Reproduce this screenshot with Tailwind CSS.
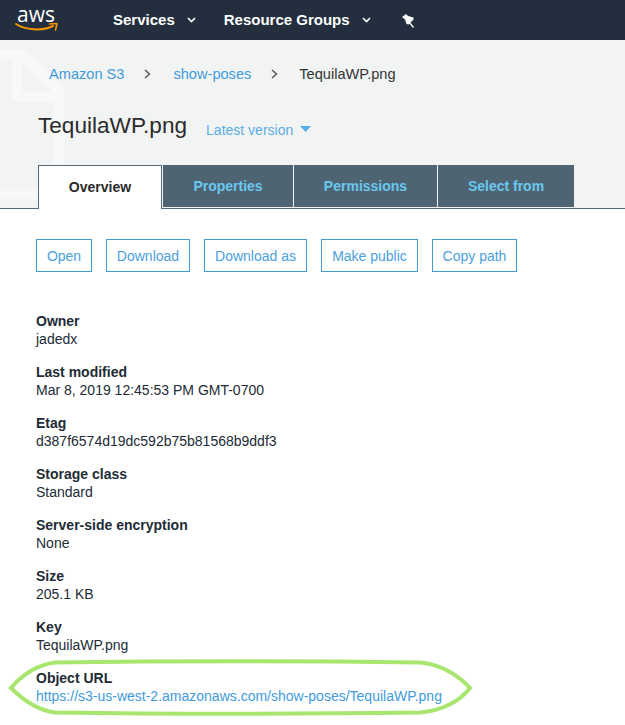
<!DOCTYPE html>
<html lang="en">
<head>
  <meta charset="UTF-8">
  <meta name="viewport" content="width=device-width, initial-scale=1.0">
  <title>TequilaWP.png - S3</title>
  <script src="https://cdn.jsdelivr.net/npm/@tailwindcss/browser@4"></script>
</head>

<body class="relative h-[725px] w-[625px] overflow-hidden bg-white font-['Liberation_Sans',Arial,sans-serif] text-[14px] leading-[18px] text-[#212b36]">

  <!-- Top nav -->
  <nav class="relative flex h-10 items-center bg-[#232f3e] text-white">
    <div class="relative h-10 w-[113px] shrink-0">
      <span class="absolute left-[17px] top-[2px] font-['Open_Sans',sans-serif] text-[21px] leading-[24px]">aws</span>
      <svg class="absolute left-[15px] top-[21px]" width="44" height="12" viewBox="0 0 44 12" fill="none">
        <path d="M1 3C10 9 27 10.5 38 5" stroke="#f79400" stroke-width="2" stroke-linecap="round"/>
        <path d="M34.5 3L42 2.5L40.5 9" stroke="#f79400" stroke-width="1.6" stroke-linecap="round" stroke-linejoin="round"/>
      </svg>
    </div>
    <span class="text-[15px] font-bold">Services</span>
    <svg class="ml-[12px]" width="9" height="6" viewBox="0 0 9 6" fill="none"><path d="M1 1L4.5 4.5L8 1" stroke="#fff" stroke-width="1.6"/></svg>
    <span class="ml-[28px] text-[15px] font-bold">Resource Groups</span>
    <svg class="ml-[12px]" width="9" height="6" viewBox="0 0 9 6" fill="none"><path d="M1 1L4.5 4.5L8 1" stroke="#fff" stroke-width="1.6"/></svg>
    <svg class="ml-[31px] mt-[1px]" width="14" height="14" viewBox="0 0 14 14" fill="#fff">
      <path d="M0 3L4 0L6 2L11.5 3.5L11.5 5.5L6.5 10.5L4.5 10L3 5.5Z"/>
      <path d="M7 8L11.5 13.5" stroke="#fff" stroke-width="1.3"/>
    </svg>
  </nav>

  <!-- Header area -->
  <header class="relative h-[169px] border-b border-[#546b7a] bg-[#f2f4f4]">
    <svg class="absolute left-0 top-0" width="70" height="168" viewBox="0 0 70 168" fill="none" stroke="#f7f8f8" stroke-linejoin="round">
      <path d="M-6 15H22L59 50V170" stroke-width="11"/>
      <path d="M17 18V57H59" stroke-width="10"/>
      <path d="M-6 154H60" stroke-width="10"/>
    </svg>

    <div class="relative flex h-[67px] items-center pl-[49px] text-[14.6px]">
      <a class="text-[#3f9bdc]">Amazon S3</a>
      <svg class="ml-[20px]" width="7" height="10" viewBox="0 0 7 10" fill="none"><path d="M1 1L5.5 5L1 9" stroke="#555" stroke-width="1.4"/></svg>
      <a class="ml-[22px] text-[#3f9bdc]">show-poses</a>
      <svg class="ml-[20px]" width="7" height="10" viewBox="0 0 7 10" fill="none"><path d="M1 1L5.5 5L1 9" stroke="#555" stroke-width="1.4"/></svg>
      <span class="ml-[21px] text-[#333]">TequilaWP.png</span>
    </div>

    <div class="relative flex h-[38px] items-center pl-[38px]">
      <h1 class="text-[22.6px] leading-[30px] text-[#2b2b2b]">TequilaWP.png</h1>
      <span class="ml-[19px] mt-[8px] text-[#5aaee6]">Latest version</span>
      <svg class="ml-[7px] mt-[6px]" width="11" height="6" viewBox="0 0 11 6" fill="#5aaee6"><path d="M0 0H11L5.5 6Z"/></svg>
    </div>

    <!-- Tabs -->
    <div class="absolute left-[38px] top-[125px] flex h-[43px] text-[14px] font-bold">
      <div class="z-10 flex h-[44px] w-[124px] items-center justify-center border border-b-0 border-[#546b7a] bg-white pb-[1px] text-[#2b2b2b]">Overview</div>
      <div class="ml-[1px] flex h-[42px] w-[130px] items-center justify-center bg-[#4f6473] text-[#69c8ee]">Properties</div>
      <div class="ml-[1px] flex h-[42px] w-[143px] items-center justify-center bg-[#4f6473] text-[#69c8ee]">Permissions</div>
      <div class="ml-[1px] flex h-[42px] w-[136px] items-center justify-center bg-[#4f6473] text-[#69c8ee]">Select from</div>
    </div>
  </header>

  <!-- Actions -->
  <div class="mt-[30px] flex gap-[14px] pl-[36px] text-[#4b9fdc]">
    <button class="h-[33px] w-[56px] border border-[#3f9bd0]">Open</button>
    <button class="h-[33px] w-[84px] border border-[#3f9bd0]">Download</button>
    <button class="h-[33px] w-[103px] border border-[#3f9bd0]">Download as</button>
    <button class="h-[33px] w-[97px] border border-[#3f9bd0]">Make public</button>
    <button class="h-[33px] w-[85px] border border-[#3f9bd0]">Copy path</button>
  </div>

  <!-- Object properties -->
  <dl class="mt-[40px] flex flex-col gap-[15px] pl-[36px]">
    <div><dt class="font-bold">Owner</dt><dd>jadedx</dd></div>
    <div><dt class="font-bold">Last modified</dt><dd>Mar 8, 2019 12:45:53 PM GMT-0700</dd></div>
    <div><dt class="font-bold">Etag</dt><dd>d387f6574d19dc592b75b81568b9ddf3</dd></div>
    <div><dt class="font-bold">Storage class</dt><dd>Standard</dd></div>
    <div><dt class="font-bold">Server-side encryption</dt><dd>None</dd></div>
    <div><dt class="font-bold">Size</dt><dd>205.1 KB</dd></div>
    <div><dt class="font-bold">Key</dt><dd>TequilaWP.png</dd></div>
    <div><dt class="font-bold">Object URL</dt><dd class="text-[#3f9bdc]">https://s3-us-west-2.amazonaws.com/show-poses/TequilaWP.png</dd></div>
  </dl>

  <!-- Green annotation round the URL -->
  <svg class="absolute left-0 top-[655px]" width="480" height="65" viewBox="0 0 480 65" fill="none">
    <path d="M55 7.5C160 6 300 6 420 7.5C442 9 460 22 470 33C460 46 442 56 420 57.5C300 59 160 59 55 57.5C36 55 22 44 11 33C22 20 36 10 55 7.5Z" stroke="#a8e66f" stroke-width="4"/>
  </svg>
</body>
</html>
